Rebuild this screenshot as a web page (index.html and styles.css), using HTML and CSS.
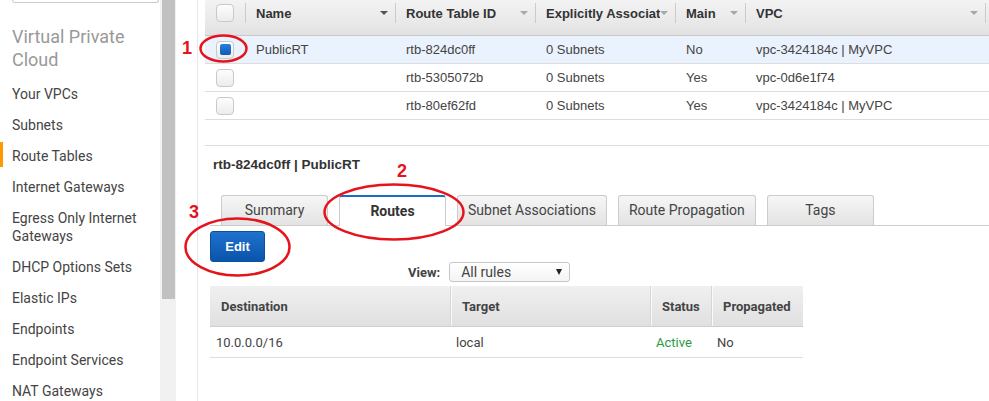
FILE: index.html
```html
<!DOCTYPE html>
<html lang="en">
  <head>
    <meta charset="UTF-8" />
    <meta name="viewport" content="width=device-width, initial-scale=1.0" />
    <title>Route Tables</title>
    <link rel="stylesheet" href="styles.css">
  </head>
  <body>
    <div class="page">
      <!-- 左侧导航 -->
      <aside class="sidebar">
        <div class="search"></div>
        <h2 class="side-title">Virtual Private Cloud</h2>
        <ul class="nav">
          <li>Your VPCs</li>
          <li>Subnets</li>
          <li class="active">Route Tables</li>
          <li>Internet Gateways</li>
          <li>Egress Only Internet Gateways</li>
          <li>DHCP Options Sets</li>
          <li>Elastic IPs</li>
          <li>Endpoints</li>
          <li>Endpoint Services</li>
          <li>NAT Gateways</li>
        </ul>
      </aside>
      <div class="scrollbar"><div class="scrollbar-thumb"></div></div>
      <div class="gutter"></div>

      <main class="main">
        <table class="grid">
          <colgroup>
            <col style="width: 40px" />
            <col style="width: 150px" />
            <col style="width: 140px" />
            <col style="width: 140px" />
            <col style="width: 70px" />
            <col style="width: 240px" />
            <col />
          </colgroup>
          <thead>
            <tr>
              <th class="check-cell"><span class="checkbox"></span></th>
              <th><div class="th-inner"><span class="th-label">Name</span><span class="sort sort-active"></span></div></th>
              <th><div class="th-inner"><span class="th-label">Route Table ID</span><span class="sort"></span></div></th>
              <th><div class="th-inner"><span class="th-label">Explicitly Associated With</span><span class="sort"></span></div></th>
              <th><div class="th-inner"><span class="th-label">Main</span><span class="sort"></span></div></th>
              <th><div class="th-inner"><span class="th-label">VPC</span><span class="sort"></span></div></th>
              <th></th>
            </tr>
          </thead>
          <tbody>
            <tr class="selected">
              <td class="check-cell"><span class="checkbox checked"></span></td>
              <td>PublicRT</td>
              <td>rtb-824dc0ff</td>
              <td>0 Subnets</td>
              <td>No</td>
              <td>vpc-3424184c | MyVPC</td>
              <td></td>
            </tr>
            <tr>
              <td class="check-cell"><span class="checkbox"></span></td>
              <td></td>
              <td>rtb-5305072b</td>
              <td>0 Subnets</td>
              <td>Yes</td>
              <td>vpc-0d6e1f74</td>
              <td></td>
            </tr>
            <tr>
              <td class="check-cell"><span class="checkbox"></span></td>
              <td></td>
              <td>rtb-80ef62fd</td>
              <td>0 Subnets</td>
              <td>Yes</td>
              <td>vpc-3424184c | MyVPC</td>
              <td></td>
            </tr>
          </tbody>
        </table>

        <div class="detail">
          <h3 class="detail-title">rtb-824dc0ff | PublicRT</h3>
          <ul class="tabs">
            <li>Summary</li>
            <li class="active">Routes</li>
            <li>Subnet Associations</li>
            <li>Route Propagation</li>
            <li>Tags</li>
          </ul>
          <button type="button" class="button">Edit</button>
          <div class="view-filter">
            <label>View:</label>
            <div class="select">All rules<span class="select-arrow"></span></div>
          </div>
          <table class="routes">
            <colgroup>
              <col style="width: 240px" />
              <col style="width: 200px" />
              <col style="width: 61px" />
              <col style="width: 92px" />
            </colgroup>
            <thead>
              <tr>
                <th>Destination</th>
                <th>Target</th>
                <th>Status</th>
                <th>Propagated</th>
              </tr>
            </thead>
            <tbody>
              <tr>
                <td>10.0.0.0/16</td>
                <td>local</td>
                <td class="status-active">Active</td>
                <td>No</td>
              </tr>
            </tbody>
          </table>
        </div>
      </main>

      <!-- 标注 -->
      <svg class="marks" width="989" height="401" viewBox="0 0 989 401">
        <ellipse cx="223.5" cy="48.5" rx="23" ry="13" />
        <ellipse cx="394" cy="212" rx="69.5" ry="27.5" />
        <ellipse cx="237.5" cy="247" rx="52" ry="28.5" />
        <text x="182" y="54">1</text>
        <text x="397" y="177">2</text>
        <text x="189" y="218">3</text>
      </svg>
    </div>
  </body>
</html>
```

FILE: styles.css
```css
html,
body {
  margin: 0;
  padding: 0;
  background-color: white;
  overflow: hidden;
}
.page {
  position: relative;
  display: flex;
  width: 989px;
  height: 401px;
  overflow: hidden;
  font-family: Roboto, "Liberation Sans", Arial, sans-serif;
  color: #444;
}
/* 侧边栏 */
.sidebar {
  width: 160px;
  flex-shrink: 0;
  background-color: white;
}
.search {
  height: 2px;
  margin: 0 1px 0 12px;
  border: 1px solid #ccc;
  border-top: none;
  border-radius: 0 0 5px 5px;
}
.side-title {
  margin: 22px 0 0 12px;
  font-size: 18px;
  line-height: 23px;
  font-weight: 400;
  color: #999;
}
.nav {
  list-style: none;
  margin: 7px 0 0 0;
  padding: 0;
}
.nav li {
  position: relative;
  padding: 6.5px 12px;
  font-size: 14px;
  line-height: 18px;
  color: #444;
}
.nav li.active::before {
  content: "";
  position: absolute;
  left: 0;
  top: 2px;
  bottom: 4px;
  width: 3px;
  background-color: #f90;
}
.scrollbar {
  width: 16px;
  flex-shrink: 0;
  background-color: #f1f1f1;
}
.scrollbar-thumb {
  width: 13px;
  height: 299px;
  margin-left: 2px;
  background-color: #c1c1c1;
}
.gutter {
  width: 21px;
  flex-shrink: 0;
  border-right: 1px solid #e6e6e6;
}
.main {
  flex: 1;
  min-width: 0;
  padding-left: 7px;
  overflow: hidden;
}
/* 路由表列表 */
.grid {
  width: 784px;
  table-layout: fixed;
  border-collapse: separate;
  border-spacing: 0;
  font-family: "Liberation Sans", Arial, sans-serif;
  font-size: 13px;
  color: #444;
}
.grid thead tr {
  background: linear-gradient(#f3f3f3, #e2e2e2);
}
.grid th {
  height: 36px;
  box-sizing: border-box;
  padding: 0 7px 9px 11px;
  text-align: left;
  font-weight: bold;
  color: #333;
  vertical-align: middle;
  border-bottom: 1px solid #c8c8c8;
  background: linear-gradient(#cbcbcb, #cbcbcb) no-repeat 0 3px / 1px 20px;
}
.grid th.check-cell {
  background: none;
}
.th-inner {
  display: flex;
  align-items: center;
}
.th-label {
  flex: 1;
  min-width: 0;
  overflow: hidden;
  white-space: nowrap;
}
.sort {
  width: 0;
  height: 0;
  flex-shrink: 0;
  border-left: 4px solid transparent;
  border-right: 4px solid transparent;
  border-top: 4px solid #a8a8a8;
}
.sort-active {
  border-top-color: #555;
}
.grid td {
  height: 28px;
  box-sizing: border-box;
  padding: 0 0 0 11px;
  border-bottom: 1px solid #ddd;
  white-space: nowrap;
  overflow: hidden;
}
.grid tr.selected td {
  background-color: #eaf2fd;
}
.grid .check-cell {
  padding-left: 11px;
}
.checkbox {
  display: block;
  position: relative;
  width: 18px;
  height: 18px;
  box-sizing: border-box;
  border: 1px solid #c9c9c9;
  border-radius: 4px;
  background: linear-gradient(#fdfdfd, #ececec);
}
.checkbox.checked::after {
  content: "";
  position: absolute;
  left: 2.5px;
  top: 2.5px;
  width: 11px;
  height: 11px;
  border-radius: 2px;
  background: linear-gradient(#2a7fde, #0f5cb8);
}
/* 详情区 */
.detail {
  margin-top: 25px;
  padding-left: 5px;
  border-top: 1px solid #ddd;
}
.detail-title {
  margin: 11px 0 0 3px;
  font-family: "Liberation Sans", Arial, sans-serif;
  font-size: 13.5px;
  line-height: 16px;
  font-weight: bold;
  color: #333;
}
.tabs {
  display: flex;
  align-items: flex-start;
  gap: 11px;
  list-style: none;
  margin: 22px 0 0 0;
  padding: 0 0 0 11px;
  border-bottom: 1px solid #ccc;
}
.tabs li {
  min-width: 107px;
  height: 30px;
  box-sizing: border-box;
  padding: 0 10px;
  border: 1px solid #ccc;
  border-bottom: none;
  border-radius: 3px 3px 0 0;
  background: linear-gradient(#f6f6f6, #e3e3e3);
  font-size: 14px;
  line-height: 29px;
  text-align: center;
  color: #444;
}
.tabs li.active {
  height: 31px;
  margin-bottom: -1px;
  border-top: 2px solid #1a6cc6;
  background: white;
  font-weight: bold;
  line-height: 28px;
  color: #333;
}
.button {
  display: block;
  width: 55px;
  height: 31px;
  margin-top: 5px;
  padding: 0;
  border: 1px solid #0b4f9e;
  border-radius: 3px;
  background: linear-gradient(#1f72cf, #0a54ab);
  color: white;
  font-family: "Liberation Sans", Arial, sans-serif;
  font-size: 13px;
  font-weight: bold;
  cursor: pointer;
}
.view-filter {
  display: flex;
  align-items: center;
  gap: 9px;
  height: 20px;
  margin-left: 198px;
}
.view-filter label {
  font-size: 13px;
  font-weight: bold;
  color: #444;
}
.select {
  display: flex;
  align-items: center;
  justify-content: space-between;
  width: 121px;
  height: 20px;
  box-sizing: border-box;
  padding: 0 7px 0 11px;
  border: 1px solid #c6c6c6;
  border-radius: 3px;
  background: linear-gradient(#ffffff, #f4f4f4);
  font-size: 14px;
  color: #444;
}
.select-arrow {
  width: 0;
  height: 0;
  border-left: 3.5px solid transparent;
  border-right: 3.5px solid transparent;
  border-top: 6px solid #222;
}
/* 路由明细 */
.routes {
  width: 593px;
  margin-top: 4px;
  table-layout: fixed;
  border-collapse: separate;
  border-spacing: 0;
  font-size: 13px;
}
.routes th {
  height: 41px;
  box-sizing: border-box;
  padding: 0 0 0 11px;
  text-align: left;
  font-weight: bold;
  color: #444;
  background: linear-gradient(#f0f0f0, #e0e0e0);
  border-bottom: 1px solid #cfcfcf;
  border-left: 1px solid #d6d6d6;
  box-shadow: inset 1px 0 #fafafa;
}
.routes th:first-child {
  border-left: none;
  box-shadow: none;
}
.routes td {
  height: 31px;
  box-sizing: border-box;
  padding: 0 0 0 6px;
  border-bottom: 1px solid #ddd;
  color: #444;
}
.routes td.status-active {
  color: #2b9a45;
}
/* 标注层 */
.marks {
  position: absolute;
  top: 0;
  left: 0;
  pointer-events: none;
}
.marks ellipse {
  fill: none;
  stroke: #e5141c;
  stroke-width: 2.5;
}
.marks text {
  fill: #e5141c;
  font-family: "Liberation Sans", Arial, sans-serif;
  font-size: 18px;
  font-weight: bold;
}
```
